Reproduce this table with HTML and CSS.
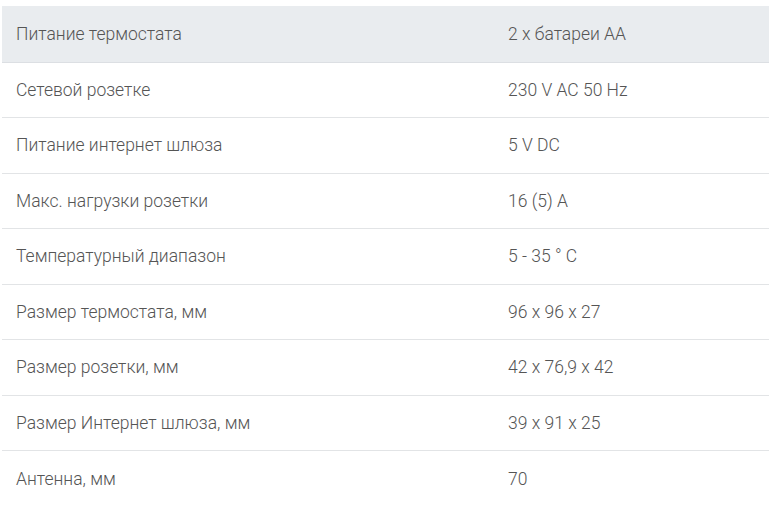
FILE: index.html
```html
<!DOCTYPE html>
<html lang="ru">
<head>
<meta charset="utf-8">
<link rel="stylesheet" href="styles.css">
</head>
<body>
<div class="specs">
  <div class="row head"><div class="cell name">Питание термостата</div><div class="cell val">2 x батареи АА</div></div>
  <div class="row"><div class="cell name">Сетевой розетке</div><div class="cell val">230 V AC 50 Hz</div></div>
  <div class="row"><div class="cell name">Питание интернет шлюза</div><div class="cell val">5 V DC</div></div>
  <div class="row"><div class="cell name">Макс. нагрузки розетки</div><div class="cell val">16 (5) A</div></div>
  <div class="row"><div class="cell name">Температурный диапазон</div><div class="cell val">5 - 35 ° C</div></div>
  <div class="row"><div class="cell name">Размер термостата, мм</div><div class="cell val">96 x 96 x 27</div></div>
  <div class="row"><div class="cell name">Размер розетки, мм</div><div class="cell val">42 x 76,9 x 42</div></div>
  <div class="row"><div class="cell name">Размер Интернет шлюза, мм</div><div class="cell val">39 x 91 x 25</div></div>
  <div class="row last"><div class="cell name">Антенна, мм</div><div class="cell val">70</div></div>
</div>
</body>
</html>
```
FILE: styles.css
```css
html, body {
  margin: 0;
  padding: 0;
  background: #ffffff;
}
body {
  font-family: Roboto, "Liberation Sans", sans-serif;
  font-weight: 300;
  font-size: 17.5px;
  color: #555555;
}
.specs {
  margin: 6px 0 0 2px;
  width: 767px;
  display: flex;
  flex-direction: column;
}
.row {
  display: grid;
  grid-template-columns: 492px 1fr;
  height: 55.5px;
  box-sizing: border-box;
  border-bottom: 1px solid #e2e4e6;
  align-items: center;
}
.row.head {
  height: 56.5px;
  background: #e9ecef;
  border-bottom-color: #dcdfe3;
}
.row.last {
  border-bottom: none;
}
.cell {
  padding: 0 14px;
  line-height: 22px;
}
```
